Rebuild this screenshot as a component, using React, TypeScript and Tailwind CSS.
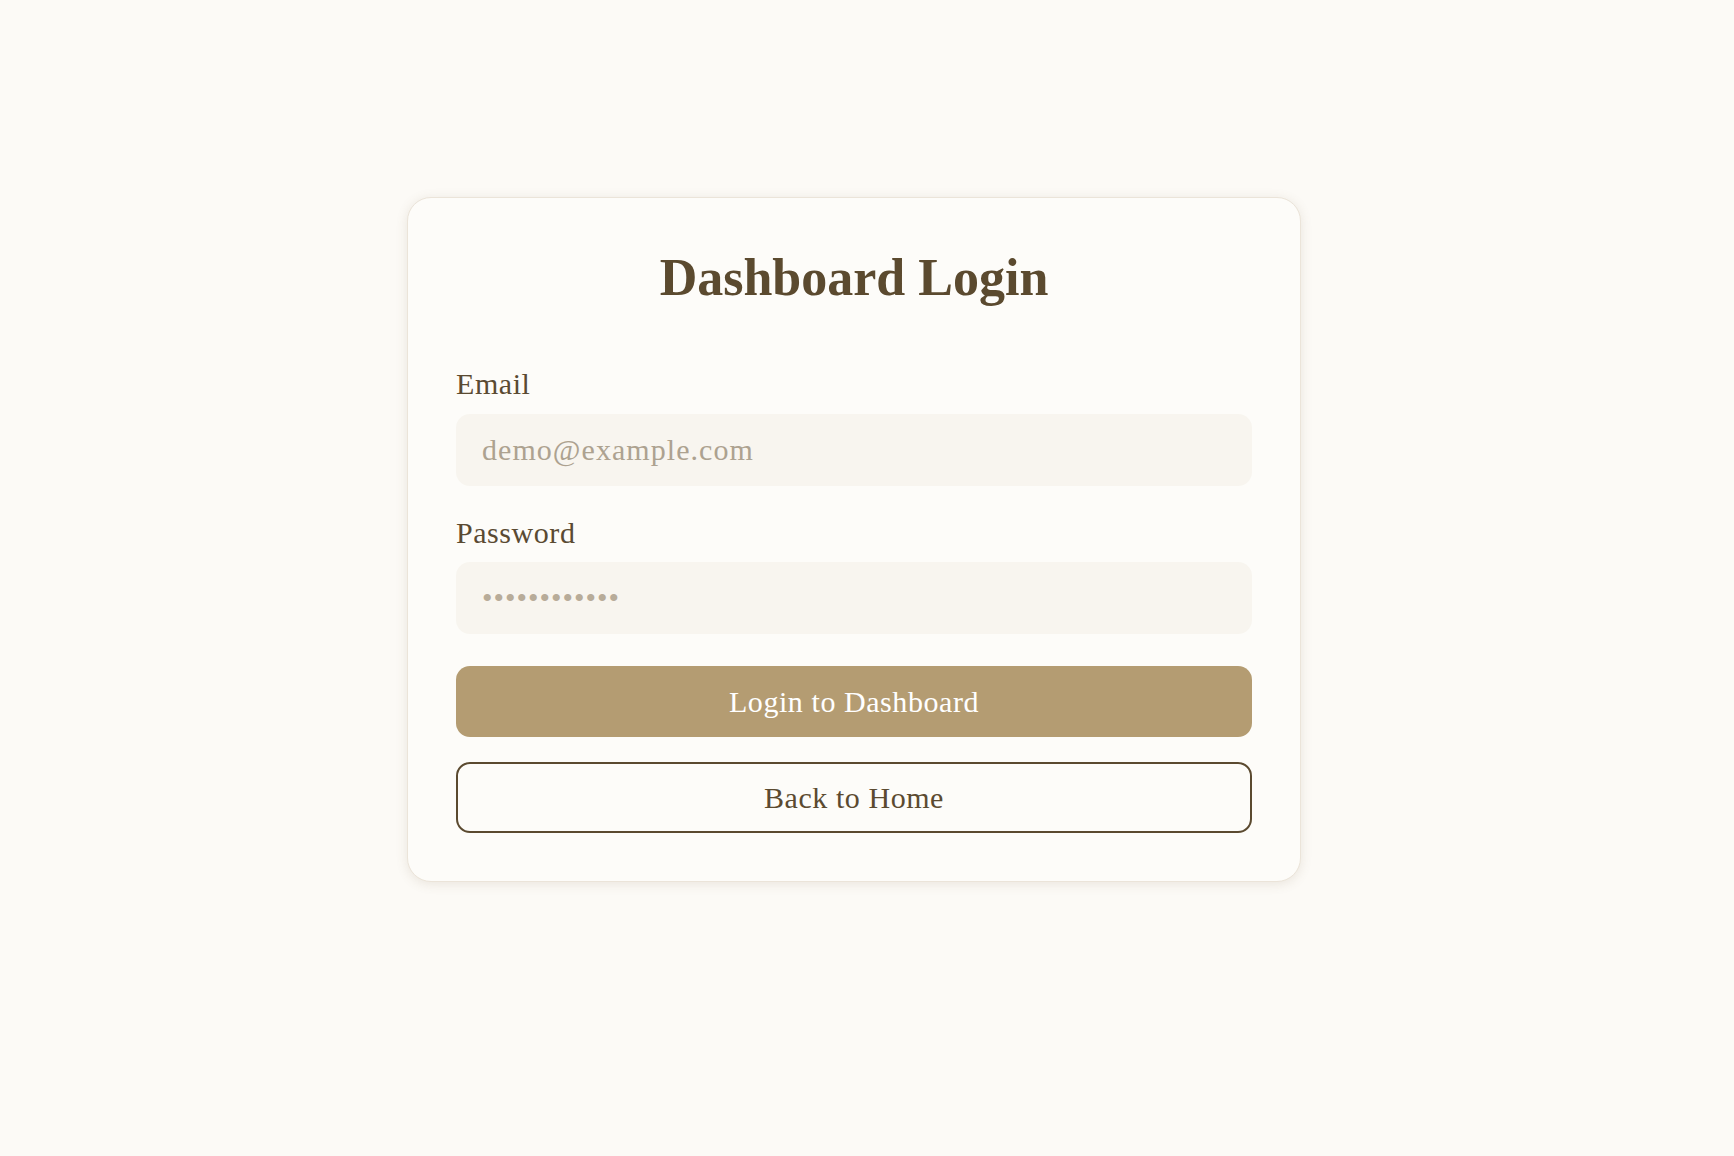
export default function App() {
  return (
    <div
      className="min-h-screen w-full bg-[#fcfaf6] flex justify-center pt-[197px] pr-[26px]"
      style={{ fontFamily: '"Liberation Serif", "Times New Roman", serif' }}
    >
      {/* Login card */}
      <div className="w-[894px] h-fit bg-[#fdfcf9] border border-[#ebe4d9] rounded-3xl shadow-[0_2px_12px_rgba(120,100,70,0.14)] px-12 pt-12 pb-12">
        <h1 className="mt-[2px] text-center text-[52px] leading-[60px] font-bold text-[#5b4a2f]">
          Dashboard Login
        </h1>

        <form className="mt-[58px] flex flex-col tracking-[0.035em]" onSubmit={(e) => e.preventDefault()}>
          <label className="flex flex-col">
            <span className="text-[30px] leading-[36px] text-[#5a4a32]">Email</span>
            <input
              type="email"
              placeholder="demo@example.com"
              className="mt-[12px] h-[72px] w-full rounded-[14px] bg-[#f8f5ef] px-[26px] text-[30px] tracking-[0.035em] text-[#5a4a32] placeholder:text-[#ada290] outline-none"
            />
          </label>

          <label className="mt-[29px] flex flex-col">
            <span className="text-[30px] leading-[36px] text-[#5a4a32]">Password</span>
            <input
              type="password"
              placeholder="••••••••••••"
              className="mt-[11px] h-[72px] w-full rounded-[14px] bg-[#f8f5ef] px-[26px] text-[30px] tracking-[1px] text-[#5a4a32] placeholder:text-[#b8ac99] outline-none"
            />
          </label>

          <button
            type="submit"
            className="mt-[32px] h-[71px] w-full rounded-[14px] bg-[#b49c72] text-[30px] text-white"
          >
            Login to Dashboard
          </button>

          <button
            type="button"
            className="mt-[25px] h-[71px] w-full rounded-[14px] border-2 border-[#5b4a30] bg-transparent text-[30px] text-[#5b4a30]"
          >
            Back to Home
          </button>
        </form>
      </div>
    </div>
  );
}
